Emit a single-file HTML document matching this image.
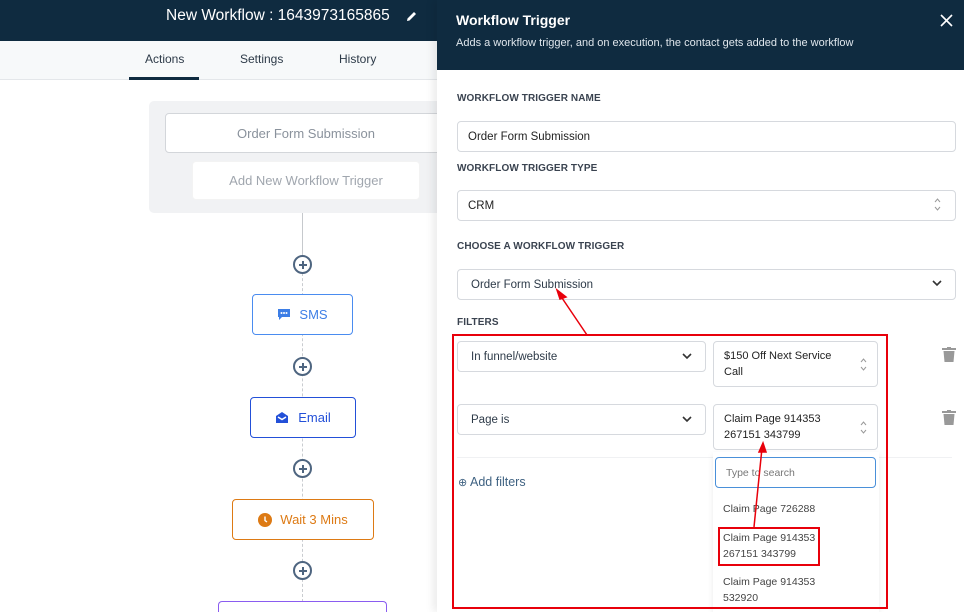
<!DOCTYPE html>
<html><head><meta charset="utf-8"><style>
*{box-sizing:border-box;margin:0;padding:0}
html,body{width:964px;height:612px;overflow:hidden}
body{position:relative;background:#fff;font-family:"Liberation Sans",sans-serif;}
.a{position:absolute}
.hdr{left:0;top:0;width:964px;height:41px;background:#0f2b40}
.tabs{left:0;top:41px;width:437px;height:39px;background:#f7f9fa;border-bottom:1px solid #e4e7ea}
.tab{top:52px;font-size:12px;color:#2d3a48}
.box{border:1px solid;border-radius:4px;background:#fff;display:flex;align-items:center;justify-content:center;font-size:13px}
.plus{width:19px;height:19px;border:2px solid #4e6580;border-radius:50%;left:293px;background:#fff}
.plus:before{content:"";position:absolute;left:3.5px;top:6.5px;width:8px;height:2px;background:#4e6580}
.plus:after{content:"";position:absolute;left:6.5px;top:3.5px;width:2px;height:8px;background:#4e6580}
.panel{left:437px;top:0;width:527px;height:612px;background:#fff;box-shadow:-4px 0 8px rgba(0,0,0,.08)}
.lbl{font-size:10px;font-weight:bold;color:#3a4350;left:457px;letter-spacing:.1px}
.inp{border:1px solid #d6d9de;border-radius:4px;background:#fff;font-size:11.5px;color:#222;padding-left:11px;display:flex;align-items:center}
.opt{font-size:10.5px;color:#444;left:723px;line-height:16px}
</style></head><body>
<div class="a hdr"></div>
<div class="a" style="left:166px;top:7px;color:#fff;font-size:15.5px">New Workflow : 1643973165865</div>
<svg class="a" style="left:406px;top:10px" width="12" height="12" viewBox="0 0 12 12"><path d="M1 11 L1.5 8.5 L8 2 L10 4 L3.5 10.5Z" fill="#fff"/></svg>
<div class="a tabs"></div>
<div class="a tab" style="left:145px">Actions</div>
<div class="a" style="left:129px;top:77px;width:70px;height:3px;background:#0f2b40"></div>
<div class="a tab" style="left:240px">Settings</div>
<div class="a tab" style="left:339px">History</div>

<div class="a" style="left:149px;top:101px;width:300px;height:112px;background:#f1f2f4;border-radius:5px"></div>
<div class="a box" style="left:165px;top:113px;width:290px;height:40px;border-color:#d3d6da;color:#8a929c;padding-right:8px">Order Form Submission</div>
<div class="a box" style="left:192px;top:161px;width:228px;height:39px;border-color:#f3f3f3;color:#a0a6ae">Add New Workflow Trigger</div>
<div class="a" style="left:302px;top:213px;width:1px;height:40px;background:#c6c9cd"></div>
<div class="a" style="left:302px;top:253px;width:0;height:359px;border-left:1px dashed #c9ccd0"></div>
<div class="a plus" style="top:255px"></div>
<div class="a plus" style="top:357px"></div>
<div class="a plus" style="top:459px"></div>
<div class="a plus" style="top:561px"></div>
<div class="a box" style="left:252px;top:294px;width:101px;height:41px;border-color:#4a8cf0;color:#3d7ee6"><svg width="14" height="13" viewBox="0 0 14 13" style="margin-right:8px"><path d="M1 1h12v8H5l-3 3V9H1z" fill="#3d7ee6"/><circle cx="4.5" cy="5" r="1" fill="#fff"/><circle cx="7" cy="5" r="1" fill="#fff"/><circle cx="9.5" cy="5" r="1" fill="#fff"/></svg>SMS</div>
<div class="a box" style="left:250px;top:397px;width:106px;height:41px;border-color:#2350d8;color:#2350d8"><svg width="14" height="13" viewBox="0 0 14 13" style="margin-right:9px"><path d="M1 5 L7 1 L13 5 V12 H1Z" fill="#2350d8"/><path d="M3 6 L7 8.5 L11 6" stroke="#fff" stroke-width="1.5" fill="none"/></svg>Email</div>
<div class="a box" style="left:232px;top:499px;width:142px;height:41px;border-color:#dd7a14;color:#dd7a14"><svg width="14" height="14" viewBox="0 0 14 14" style="margin-right:8px"><circle cx="7" cy="7" r="7" fill="#dd7a14"/><path d="M7 3.5V7.5L9 9" stroke="#fff" stroke-width="1.4" fill="none"/></svg>Wait 3 Mins</div>
<div class="a" style="left:218px;top:601px;width:169px;height:11px;border:1px solid #8a5cf0;border-bottom:none;border-radius:4px 4px 0 0;background:#fff"></div>

<div class="a panel"></div>
<div class="a" style="left:437px;top:0;width:527px;height:70px;background:#0f2b40"></div>
<div class="a" style="left:456px;top:12px;color:#fff;font-size:14px;font-weight:bold">Workflow Trigger</div>
<div class="a" style="left:456px;top:37px;color:#dfe6ec;font-size:11px">Adds a workflow trigger, and on execution, the contact gets added to the workflow</div>
<svg class="a" style="left:940px;top:14px" width="13" height="13" viewBox="0 0 13 13"><path d="M1 1L12 12M12 1L1 12" stroke="#fff" stroke-width="1.6"/></svg>

<div class="a lbl" style="top:93px">WORKFLOW TRIGGER NAME</div>
<div class="a inp" style="left:457px;top:121px;width:499px;height:31px;padding-left:10px">Order Form Submission</div>
<div class="a lbl" style="top:163px">WORKFLOW TRIGGER TYPE</div>
<div class="a inp" style="left:457px;top:190px;width:499px;height:31px;padding-left:10px">CRM</div>
<svg class="a" style="left:934px;top:198px" width="7" height="13" viewBox="0 0 7 13"><path d="M1 4l2.5-3 2.5 3M1 9l2.5 3 2.5-3" stroke="#999" fill="none"/></svg>
<div class="a lbl" style="top:241px">CHOOSE A WORKFLOW TRIGGER</div>
<div class="a inp" style="left:457px;top:269px;width:499px;height:31px;padding-left:13px;color:#2d3a48">Order Form Submission</div>
<svg class="a" style="left:932px;top:280px" width="10" height="7" viewBox="0 0 10 7"><path d="M1 1l4 4 4-4" stroke="#333" stroke-width="1.6" fill="none"/></svg>
<div class="a lbl" style="top:317px">FILTERS</div>

<div class="a inp" style="left:457px;top:341px;width:249px;height:31px;padding-left:13px;color:#2d3a48">In funnel/website</div>
<svg class="a" style="left:682px;top:353px" width="10" height="7" viewBox="0 0 10 7"><path d="M1 1l4 4 4-4" stroke="#333" stroke-width="1.6" fill="none"/></svg>
<div class="a inp" style="left:713px;top:341px;width:165px;height:46px;padding-left:10px;line-height:16px;color:#222;font-size:11px">$150 Off Next Service<br>Call</div>
<div class="a inp" style="left:457px;top:404px;width:249px;height:31px;padding-left:13px;color:#2d3a48">Page is</div>
<svg class="a" style="left:682px;top:416px" width="10" height="7" viewBox="0 0 10 7"><path d="M1 1l4 4 4-4" stroke="#333" stroke-width="1.6" fill="none"/></svg>
<div class="a inp" style="left:713px;top:404px;width:165px;height:46px;padding-left:10px;line-height:16px;color:#222;font-size:11px">Claim Page 914353<br>267151 343799</div>
<svg class="a" style="left:860px;top:358px" width="7" height="13" viewBox="0 0 7 13"><path d="M1 4l2.5-3 2.5 3M1 9l2.5 3 2.5-3" stroke="#999" fill="none"/></svg>
<svg class="a" style="left:860px;top:421px" width="7" height="13" viewBox="0 0 7 13"><path d="M1 4l2.5-3 2.5 3M1 9l2.5 3 2.5-3" stroke="#999" fill="none"/></svg>
<svg class="a" style="left:942px;top:347px" width="14" height="15" viewBox="0 0 14 15"><rect x="0" y="1" width="14" height="2" fill="#999"/><rect x="5" y="0" width="4" height="2" fill="#999"/><path d="M1.5 4h11l-1 11h-9z" fill="#999"/></svg>
<svg class="a" style="left:942px;top:410px" width="14" height="15" viewBox="0 0 14 15"><rect x="0" y="1" width="14" height="2" fill="#999"/><rect x="5" y="0" width="4" height="2" fill="#999"/><path d="M1.5 4h11l-1 11h-9z" fill="#999"/></svg>
<div class="a" style="left:457px;top:457px;width:495px;height:1px;background:#f0f1f3"></div>
<div class="a" style="left:458px;top:475px;font-size:12.5px;color:#3f6282"><span style="font-size:11px">⊕</span> Add filters</div>

<div class="a" style="left:713px;top:452px;width:166px;height:160px;background:#fff;box-shadow:0 2px 6px rgba(0,0,0,.08)"></div>
<div class="a inp" style="left:715px;top:457px;width:161px;height:31px;border:1.5px solid #4a90d9;color:#777;font-size:10.5px;padding-left:10px">Type to search</div>
<div class="a opt" style="top:501px">Claim Page 726288</div>
<div class="a opt" style="top:530px">Claim Page 914353<br>267151 343799</div>
<div class="a opt" style="top:574px">Claim Page 914353<br>532920</div>
<div class="a" style="left:718px;top:527px;width:102px;height:39px;border:2px solid #e8000b"></div>
<div class="a" style="left:452px;top:334px;width:436px;height:275px;border:2px solid #e8000b"></div>
<svg class="a" style="left:0;top:0" width="964" height="612"><g stroke="#e8000b" stroke-width="1.5" fill="#e8000b"><line x1="587" y1="335" x2="560" y2="295"/><path d="M557 290 L566 297 L560 299Z"/><line x1="754" y1="527" x2="762" y2="448"/><path d="M763 443 L766 452 L759 452Z"/></g></svg>
</body></html>
